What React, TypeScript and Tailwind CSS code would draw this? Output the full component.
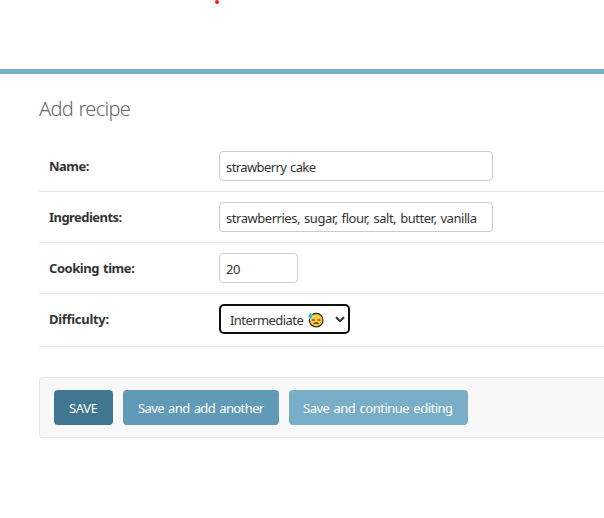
import type { ReactNode } from "react";

function Row({ label, labelClass, rowClass, children }: { label: string; labelClass: string; rowClass: string; children: ReactNode }) {
  return (
    <div className={`flex items-start border-b border-[#e6e6e6] pt-[10px] pl-[10px] ${rowClass}`}>
      <label className={`w-[170px] shrink-0 pt-[5px] text-[13px] leading-5 font-bold whitespace-nowrap text-[#333] ${labelClass}`}>{label}</label>
      {children}
    </div>
  );
}

function Field({ value, className }: { value: string; className: string }) {
  return (
    <div className={`flex h-[30px] items-center rounded-[4px] border border-[#ccc] pt-[2px] pl-[6px] text-[13px] leading-4 whitespace-nowrap text-[#333] ${className}`}>
      {value}
    </div>
  );
}

function SweatFace() {
  return (
    <svg className="ml-[4px] h-4 w-4 shrink-0" viewBox="0 0 16 16" fill="none">
      <circle cx="8.2" cy="8.2" r="6.8" fill="#ffc83d" stroke="#201e1b" strokeWidth="1.1" />
      <path d="M3.8 8h3M9.5 8h3" stroke="#302a20" strokeWidth="1.1" />
      <path d="M5.6 11.9c1.4-1.2 3.6-1.2 5 0" stroke="#302a20" strokeWidth="1.1" />
      <path d="M2.5.4C1.4 2 .4 3.1.4 4.4a2.1 2.1 0 0 0 4.2 0C4.6 3.1 3.6 2 2.5.4Z" fill="#28b9ec" stroke="#fff" strokeWidth=".4" />
    </svg>
  );
}

export default function App() {
  return (
    <div className="h-[518px] w-[604px] overflow-hidden bg-white font-['Noto_Sans',sans-serif]">
      <header className="h-[74px] border-b-[5px] border-[#79aec8]">
        <div className="ml-[215px] h-1 w-1 rounded-full bg-[#ed1c24]" />
      </header>
      <main className="pt-[20px] pl-[39px]">
        <h1 className="h-[47px] text-[20px] leading-[30px] font-light tracking-[-0.7px] [word-spacing:1px] whitespace-nowrap text-[#666]">Add recipe</h1>
        <form>
          <Row label="Name:" labelClass="tracking-[-0.5px]" rowClass="h-[51px]">
            <Field value="strawberry cake" className="w-[274px] tracking-[-0.6px] [word-spacing:1px]" />
          </Row>
          <Row label="Ingredients:" labelClass="tracking-[-0.55px]" rowClass="h-[51px]">
            <Field value="strawberries, sugar, flour, salt, butter, vanilla" className="w-[274px] tracking-[-0.46px] [word-spacing:1.1px]" />
          </Row>
          <Row label="Cooking time:" labelClass="tracking-[-0.45px] [word-spacing:1px]" rowClass="h-[51px]">
            <Field value="20" className="w-[79px] tracking-[-0.4px]" />
          </Row>
          <Row label="Difficulty:" labelClass="tracking-[-0.3px]" rowClass="h-[53px]">
            <div className="flex h-[30px] w-[131px] items-center rounded-[5px] border-2 border-[#101010] pt-[2px] pl-[9px] text-[13px] whitespace-nowrap text-[#333]">
              <span className="w-[74px] leading-4 tracking-[-0.57px]">Intermediate</span>
              <SweatFace />
              <svg className="-mt-[1px] ml-[11px] h-[7px] w-[10px] shrink-0" viewBox="0 0 10 7" fill="none">
                <path d="m1 1.2 4 4 4-4" stroke="#333" strokeWidth="2" />
              </svg>
            </div>
          </Row>
          <div className="mt-[30px] flex h-[61px] gap-[10px] rounded-l-[4px] border border-r-0 border-[#e6e6e6] bg-[#f8f8f8] pt-[12px] pl-[14px] text-[13px] leading-[17px] whitespace-nowrap text-white">
            <div className="flex h-[35px] w-[59px] items-center rounded-[4px] bg-[#417690] pt-[2px] pl-[15px] tracking-[-0.3px]">SAVE</div>
            <div className="flex h-[35px] w-[156px] items-center rounded-[4px] bg-[#609ab6] pt-[2px] pl-[15px] tracking-[-0.6px] [word-spacing:1.3px]">Save and add another</div>
            <div className="flex h-[35px] w-[179px] items-center rounded-[4px] bg-[#79aec8] pt-[2px] pl-[14px] tracking-[-0.5px] [word-spacing:1.3px]">Save and continue editing</div>
          </div>
        </form>
      </main>
    </div>
  );
}
